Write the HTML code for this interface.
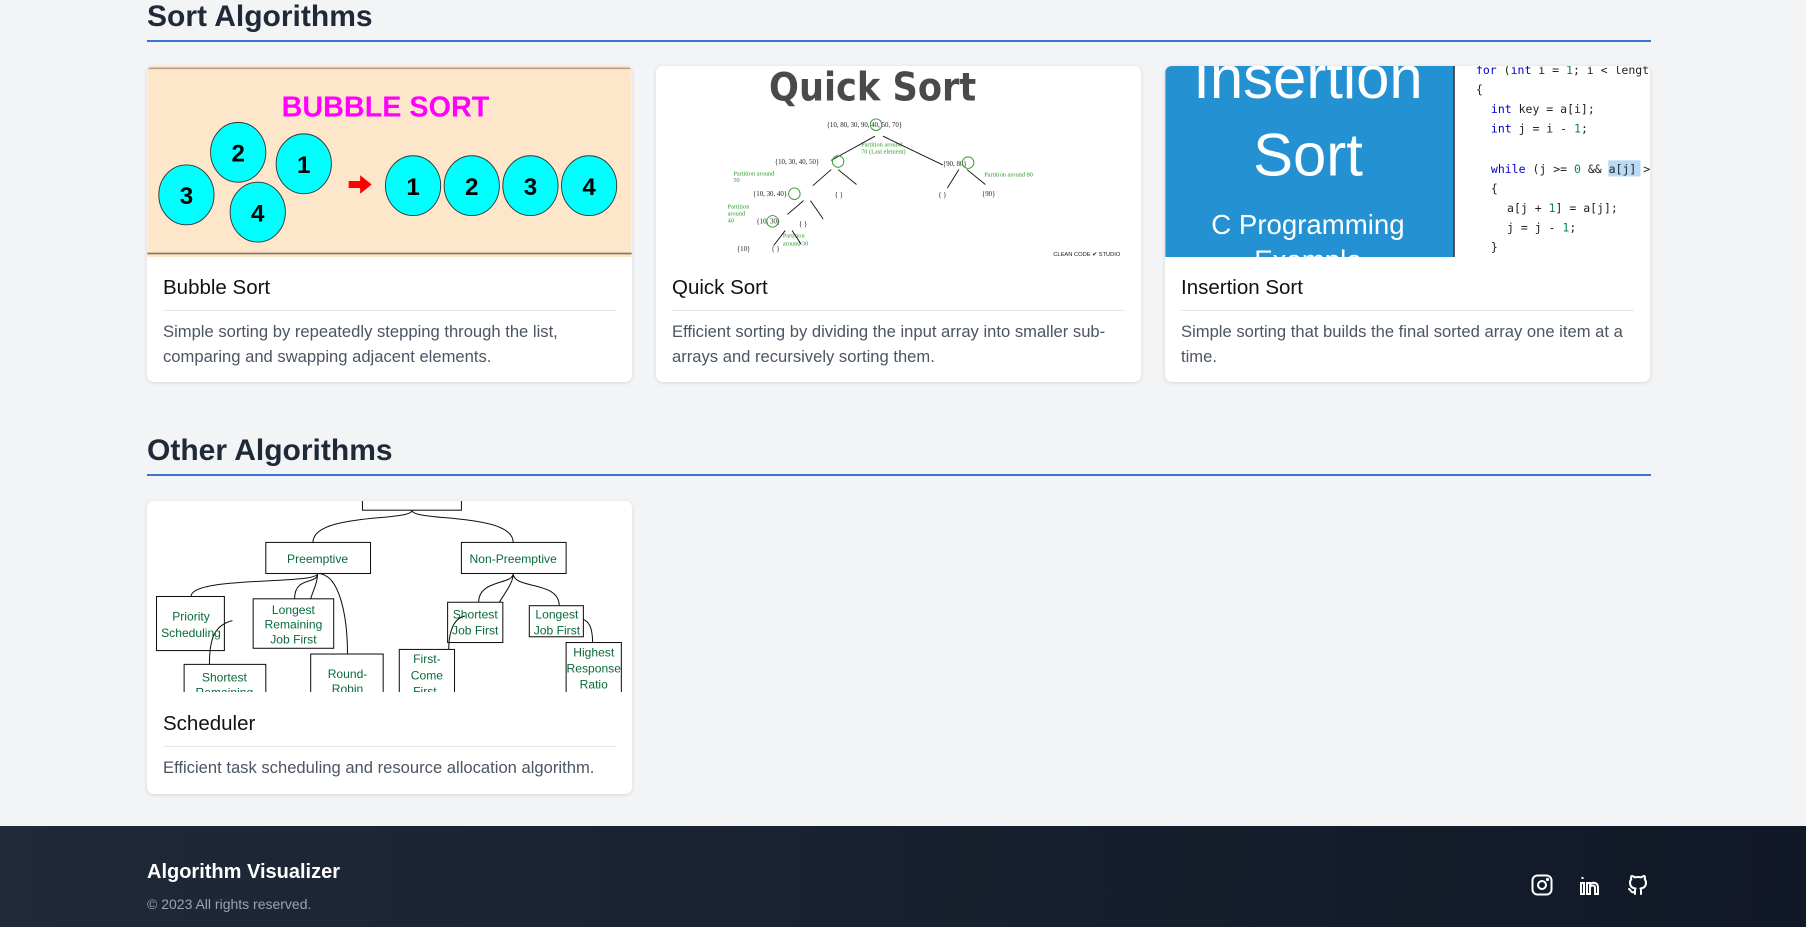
<!DOCTYPE html>
<html><head><meta charset="utf-8"><style>
*{box-sizing:border-box;margin:0;padding:0}
body{width:1806px;height:927px;overflow:hidden;background:#f3f4f6;font-family:"Liberation Sans",sans-serif;color:#1f2937;position:relative}
.h{position:absolute;left:147px;width:1504px;font-size:30px;font-weight:bold;color:#1f2937;border-bottom:2px solid #3b74d6;height:0}
.h span{position:absolute;left:0;bottom:6px;white-space:nowrap}
.card{position:absolute;width:485px;background:#fff;border-radius:7px;box-shadow:0 1px 4px rgba(0,0,0,.12);overflow:hidden}
.card svg{display:block}
.t{position:absolute;left:16px;right:16px;font-size:20.5px;color:#111;border-bottom:1px solid #e5e7eb;padding-bottom:10px}
.d{position:absolute;left:16px;right:16px;font-size:16.6px;line-height:25px;color:#4b5563}
footer{position:absolute;left:0;top:826px;width:1806px;height:101px;background:linear-gradient(90deg,#1f2937,#111827)}
</style></head><body>
<div class="h" style="top:40px"><span>Sort Algorithms</span></div>
<div class="h" style="top:474px"><span>Other Algorithms</span></div>

<div class="card" style="left:147px;top:66px;height:316px">
<svg width="485" height="191" viewBox="0 0 421 166">
<rect width="421" height="166" fill="#fde6c9"/>
<line x1="0" y1="2" x2="421" y2="2" stroke="#b8a088" stroke-width="1.5"/>
<line x1="0" y1="163" x2="421" y2="163" stroke="#8a7a6a" stroke-width="1.5"/>
<text x="207" y="44" text-anchor="middle" font-family="Liberation Sans" font-weight="bold" font-size="25" fill="#ff00ff">BUBBLE SORT</text>
<g fill="#00ffff" stroke="#333" stroke-width=".8">
<ellipse cx="34" cy="112" rx="24" ry="26"/><ellipse cx="79" cy="75" rx="24" ry="26"/><ellipse cx="136" cy="85" rx="24" ry="26"/><ellipse cx="96" cy="127" rx="24" ry="26"/>
<ellipse cx="231" cy="104" rx="24" ry="26"/><ellipse cx="282" cy="104" rx="24" ry="26"/><ellipse cx="333" cy="104" rx="24" ry="26"/><ellipse cx="384" cy="104" rx="24" ry="26"/></g>
<g font-family="Liberation Sans" font-weight="bold" font-size="21" text-anchor="middle" fill="#000">
<text x="34" y="120">3</text><text x="79" y="83">2</text><text x="136" y="93">1</text><text x="96" y="135">4</text>
<text x="231" y="112">1</text><text x="282" y="112">2</text><text x="333" y="112">3</text><text x="384" y="112">4</text></g>
<path d="M175 100h10v-5l10 8-10 8v-5h-10z" fill="#f00"/>
</svg>
<div class="t" style="top:210px">Bubble Sort</div>
<div class="d" style="top:253px">Simple sorting by repeatedly stepping through the list, comparing and swapping adjacent elements.</div>
</div>

<div class="card" style="left:656px;top:66px;height:316px">
<svg width="485" height="191" viewBox="0 0 421 166">
<rect width="421" height="166" fill="#fff"/>
<text x="188" y="30" text-anchor="middle" font-family="DejaVu Sans" font-weight="bold" font-size="34" fill="#4a4a4a" textLength="180" lengthAdjust="spacingAndGlyphs">Quick Sort</text>
<g font-family="Liberation Serif" font-size="6" fill="#222">
<text x="148" y="53">{10, 80, 30, 90, 40, 50, 70}</text>
<text x="103" y="85">{10, 30, 40, 50}</text><text x="249" y="87">{90, 80}</text>
<text x="84" y="113">{10, 30, 40}</text><text x="155" y="114">{ }</text><text x="245" y="114">{ }</text><text x="283" y="113">{90}</text>
<text x="87" y="137">{10, 30}</text><text x="124" y="139">{ }</text><text x="70" y="161">{10}</text><text x="100" y="161">{ }</text></g>
<g font-family="Liberation Serif" font-size="5.5" fill="#2a9a2a">
<text x="178" y="70">Partition around</text><text x="178" y="76">70 (Last element)</text>
<text x="67" y="95">Partition around</text><text x="67" y="101">50</text>
<text x="285" y="96">Partition around 80</text>
<text x="62" y="124">Partition</text><text x="62" y="130">around</text><text x="62" y="136">40</text>
<text x="110" y="149">Partition</text><text x="110" y="156">around 30</text></g>
<g stroke="#111" stroke-width=".8" fill="none">
<path d="M190 61l-38 21M197 61l52 25M152 90l-16 14M158 90l16 13M263 90l-10 16M270 90l16 13M128 117l-14 12M134 117l11 16M112 143l-10 13M118 143l8 12"/></g>
<g stroke="#2a9a2a" fill="none" stroke-width=".8"><circle cx="191" cy="51" r="5"/><circle cx="158" cy="83" r="5"/><circle cx="271" cy="84" r="5"/><circle cx="120" cy="111" r="5"/><circle cx="101" cy="135" r="5"/></g>
<text x="345" y="165" font-family="Liberation Sans" font-size="5" fill="#222">CLEAN CODE ✔ STUDIO</text>
</svg>
<div class="t" style="top:210px">Quick Sort</div>
<div class="d" style="top:253px">Efficient sorting by dividing the input array into smaller sub-arrays and recursively sorting them.</div>
</div>

<div class="card" style="left:1165px;top:66px;height:316px">
<svg width="485" height="191" viewBox="0 0 421 166">
<rect width="421" height="166" fill="#fff"/>
<rect width="251" height="166" fill="#2491d3"/>
<line x1="251" y1="0" x2="251" y2="166" stroke="#111" stroke-width="1"/>
<g font-family="Liberation Sans" fill="#fff" text-anchor="middle">
<text x="124" y="28" font-size="52">Insertion</text><text x="124" y="95" font-size="52">Sort</text>
<text x="124" y="146" font-size="24">C Programming</text><text x="124" y="177" font-size="24">Example</text></g>
<g font-family="DejaVu Sans Mono" font-size="10" fill="#222">
<text x="270" y="7"><tspan fill="#00c">for</tspan> (<tspan fill="#00c">int</tspan> i = <tspan fill="#098658">1</tspan>; i &lt; lengt</text>
<text x="270" y="24">{</text>
<text x="283" y="41"><tspan fill="#00c">int</tspan> key = a[i];</text>
<text x="283" y="58"><tspan fill="#00c">int</tspan> j = i - <tspan fill="#098658">1</tspan>;</text>
<rect x="385" y="82" width="28" height="14" fill="#b9d9f7"/>
<text x="283" y="93"><tspan fill="#00c">while</tspan> (j &gt;= <tspan fill="#098658">0</tspan> &amp;&amp; a[j] &gt;</text>
<text x="283" y="110">{</text>
<text x="297" y="127">a[j + <tspan fill="#098658">1</tspan>] = a[j];</text>
<text x="297" y="144">j = j - <tspan fill="#098658">1</tspan>;</text>
<text x="283" y="161">}</text></g>
</svg>
<div class="t" style="top:210px">Insertion Sort</div>
<div class="d" style="top:253px">Simple sorting that builds the final sorted array one item at a time.</div>
</div>

<div class="card" style="left:147px;top:501px;height:293px">
<svg width="485" height="191" viewBox="0 0 421 166">
<rect width="421" height="166" fill="#fff"/>
<g fill="none" stroke="#111" stroke-width=".9">
<rect x="187" y="-5" width="86" height="13"/>
<rect x="103" y="36" width="91" height="27"/><rect x="273" y="36" width="91" height="27"/>
<rect x="8" y="83" width="59" height="47"/><rect x="92" y="85" width="70" height="43"/>
<rect x="32" y="142" width="71" height="30"/><rect x="142" y="133" width="63" height="40"/>
<rect x="261" y="88" width="48" height="35"/><rect x="332" y="91" width="47" height="27"/>
<rect x="219" y="129" width="48" height="45"/><rect x="364" y="123" width="48" height="50"/>
<path d="M230 8c0 10-86 2-86 28M230 8c0 10 88 2 88 28M148 63c0 10-110 2-110 20M148 63c0 10-20 2-20 22M148 63c0 8-4 15-6 22M148 63c20 0 26 40 26 70M74 104c-16 4-20 16-20 38M318 63c0 10-30 5-30 25M318 63c0 8-6 15-12 25M318 63c0 14 40 6 40 28M276 100c-10 2-14 14-14 29M379 103c6 2 8 10 8 20"/></g>
<g font-family="Liberation Sans" font-size="10.5" fill="#0a6b3a" text-anchor="middle">
<text x="148" y="54">Preemptive</text><text x="318" y="54">Non-Preemptive</text>
<text x="38" y="104">Priority</text><text x="38" y="118">Scheduling</text>
<text x="127" y="98">Longest</text><text x="127" y="111">Remaining</text><text x="127" y="124">Job First</text>
<text x="67" y="157">Shortest</text><text x="67" y="170">Remaining</text>
<text x="174" y="154">Round-</text><text x="174" y="167">Robin</text>
<text x="285" y="102">Shortest</text><text x="285" y="116">Job First</text>
<text x="356" y="102">Longest</text><text x="356" y="116">Job First</text>
<text x="243" y="141">First-</text><text x="243" y="155">Come</text><text x="243" y="169">First-</text>
<text x="388" y="135">Highest</text><text x="388" y="149">Response</text><text x="388" y="163">Ratio</text></g>
</svg>
<div class="t" style="top:211px">Scheduler</div>
<div class="d" style="top:254px">Efficient task scheduling and resource allocation algorithm.</div>
</div>

<footer>
<div style="position:absolute;left:147px;top:35px;color:#fff;font-weight:bold;font-size:20px">Algorithm Visualizer</div>
<div style="position:absolute;left:147px;top:70px;color:#9ca3af;font-size:14px">© 2023 All rights reserved.</div>
<svg style="position:absolute;left:1530px;top:47px" width="24" height="24" viewBox="0 0 24 24" fill="none" stroke="#fff" stroke-width="2"><rect x="2.5" y="2.5" width="19" height="19" rx="5"/><circle cx="12" cy="12" r="4"/><circle cx="17.5" cy="6.5" r=".6" fill="#fff"/></svg>
<svg style="position:absolute;left:1578px;top:47px" width="24" height="24" viewBox="0 0 24 24" fill="none" stroke="#fff" stroke-width="2"><path d="M3 10v11h3V10zM4.5 4v2"/><path d="M9 21V10h3v1.5c1-1.2 2.3-1.8 3.5-1.8 3 0 4.5 2 4.5 5V21h-3v-6c0-1.5-.8-2.5-2.2-2.5S12 13.5 12 15v6z"/></svg>
<svg style="position:absolute;left:1626px;top:47px" width="24" height="24" viewBox="0 0 24 24" fill="none" stroke="#fff" stroke-width="2" stroke-linecap="round" stroke-linejoin="round"><path d="M9 19c-4.3 1.4-4.3-2.5-6-3m12 5v-3.5c0-1 .1-1.4-.5-2 2.8-.3 5.5-1.4 5.5-6a4.6 4.6 0 0 0-1.3-3.2 4.2 4.2 0 0 0-.1-3.2s-1.1-.3-3.5 1.3a12.3 12.3 0 0 0-6.2 0C6.5 2.8 5.4 3.1 5.4 3.1a4.2 4.2 0 0 0-.1 3.2A4.6 4.6 0 0 0 4 9.5c0 4.6 2.7 5.7 5.5 6-.6.6-.6 1.2-.5 2V21"/></svg>
</footer>
</body></html>
